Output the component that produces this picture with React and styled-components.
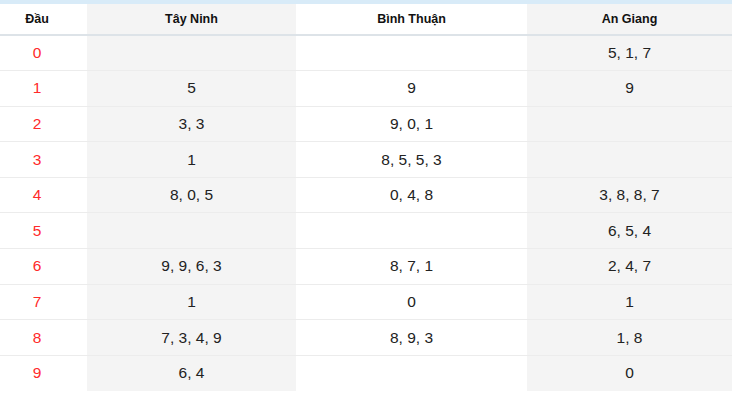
import React from "react";
import styled, { createGlobalStyle } from "styled-components";

const Global = createGlobalStyle`
  html, body { margin: 0; padding: 0; background: #fff; }
  body { font-family: "Liberation Sans", Arial, sans-serif; }
`;

const Wrap = styled.div`
  width: 732px;
  border-top: 4px solid #d8ebf8;
`;

const Table = styled.table`
  width: 732px;
  border-collapse: collapse;
  table-layout: fixed;
`;

const HeadCell = styled.th`
  height: 30px;
  padding: 0 ${(p) => (p.$first ? "13px" : "0")} 0 0;
  font-size: 12.5px;
  font-weight: bold;
  color: #111;
  text-align: center;
  vertical-align: middle;
  background: ${(p) => (p.$shade ? "#f4f4f4" : "#fff")};
  border-bottom: 2px solid #dde3e8;
`;

const Row = styled.tr`
  height: 35.6px;
  border-bottom: ${(p) => (p.$last ? "none" : "1px solid #ececec")};
`;

const Cell = styled.td`
  padding: 0 ${(p) => (p.$first ? "13px" : "0")} 0 0;
  font-size: 15.5px;
  color: ${(p) => (p.$first ? "#ff2a2a" : "#222")};
  text-align: center;
  vertical-align: middle;
  background: ${(p) => (p.$shade ? "#f4f4f4" : "#fff")};
`;

const columns = ["Tây Ninh", "Bình Thuận", "An Giang"];
const widths = [87, 209, 231, 205];

const data = [
  ["", "", "5, 1, 7"],
  ["5", "9", "9"],
  ["3, 3", "9, 0, 1", ""],
  ["1", "8, 5, 5, 3", ""],
  ["8, 0, 5", "0, 4, 8", "3, 8, 8, 7"],
  ["", "", "6, 5, 4"],
  ["9, 9, 6, 3", "8, 7, 1", "2, 4, 7"],
  ["1", "0", "1"],
  ["7, 3, 4, 9", "8, 9, 3", "1, 8"],
  ["6, 4", "", "0"],
];

export default function App() {
  return (
    <Wrap>
      <Global />
      <Table>
        <colgroup>
          {widths.map((w, i) => (
            <col key={i} style={{ width: w }} />
          ))}
        </colgroup>
        <thead>
          <tr>
            <HeadCell $first>Đầu</HeadCell>
            {columns.map((c, i) => (
              <HeadCell key={c} $shade={i !== 1}>
                {c}
              </HeadCell>
            ))}
          </tr>
        </thead>
        <tbody>
          {data.map((row, r) => (
            <Row key={r} $last={r === data.length - 1}>
              <Cell $first>{r}</Cell>
              {row.map((v, i) => (
                <Cell key={i} $shade={i !== 1}>
                  {v}
                </Cell>
              ))}
            </Row>
          ))}
        </tbody>
      </Table>
    </Wrap>
  );
}
